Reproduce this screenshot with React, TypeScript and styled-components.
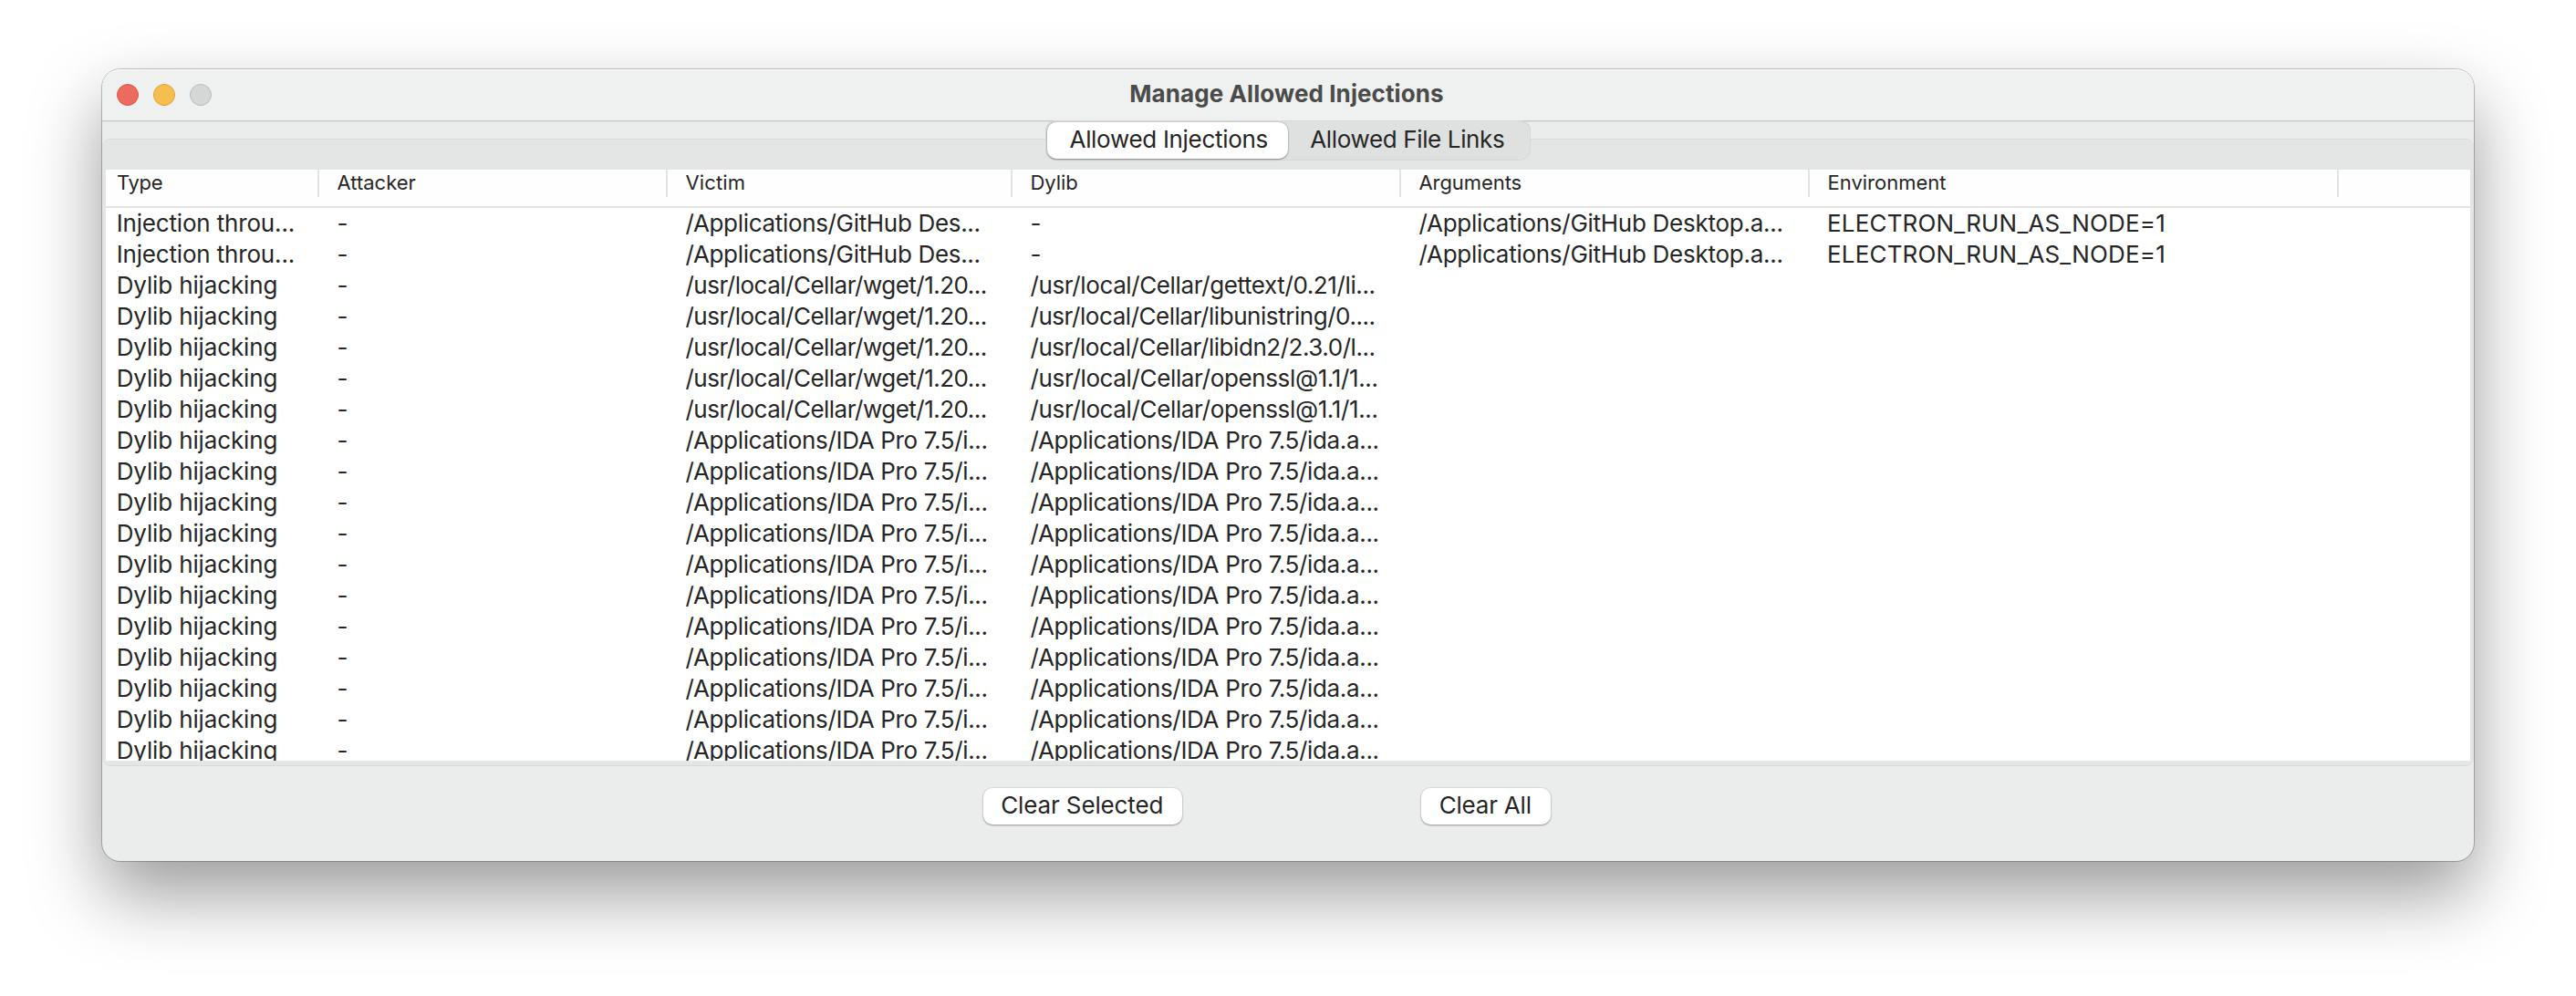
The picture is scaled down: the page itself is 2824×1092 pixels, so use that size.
import React from 'react';
import styled, { createGlobalStyle } from 'styled-components';

const GlobalStyle = createGlobalStyle`
  *, *::before, *::after { box-sizing: border-box; }
  body {
    margin: 0;
    background: #fff;
    overflow: hidden;
  }
`;

const Desktop = styled.main`
  width: 2824px;
  height: 1092px;
  padding: 76px 112px 148px;
  background: #fff;
  font-family: Inter, "Liberation Sans", sans-serif;
  font-size: 26px;
  color: #262626;
`;

const Window = styled.section`
  display: flex;
  flex-direction: column;
  height: 868px;
  border-radius: 20px;
  background: #ebedec;
  box-shadow:
    0 0 0 1px rgba(0, 0, 0, 0.23),
    0 36px 80px rgba(0, 0, 0, 0.4);
`;

const TitleBar = styled.header`
  display: grid;
  grid-template-columns: 1fr auto 1fr;
  height: 57px;
  border-bottom: 1px solid #c5c7c6;
  border-radius: 20px 20px 0 0;
  background: #eff1f0;
  box-shadow: inset 0 2px 1px -1px #fff, 0 1px 0 #dfe1e0;
`;

const TrafficLights = styled.div`
  display: flex;
  align-items: center;
  gap: 16px;
  padding-left: 16px;
`;

const Light = styled.span<{ $fill: string; $edge: string }>`
  width: 24px;
  height: 24px;
  border: 1px solid ${(p) => p.$edge};
  border-radius: 50%;
  background: ${(p) => p.$fill};
`;

const Title = styled.h1`
  margin: 0 3px 0 0;
  font-size: 26px;
  font-weight: 700;
  line-height: 53px;
  letter-spacing: 0.093px;
  color: #4a4b4a;
`;

const Content = styled.div`
  display: flex;
  flex-direction: column;
  padding-top: 19px;
`;

const TabPane = styled.div`
  display: flex;
  flex-direction: column;
  height: 688px;
  padding: 0 4px 5px;
  border-top: 1px solid #d8dad9;
  border-bottom: 1px solid #d8dad9;
  border-radius: 9px;
  background: #e4e6e5;
`;

const TabStrip = styled.div`
  display: flex;
  align-self: center;
  width: 532px;
  height: 44px;
  margin: -21px 0 10px;
  padding: 2px;
  border-radius: 12px;
  background: #dfe1e0;
  box-shadow: inset 0 0 0 1px #d7d9d8, inset 0 1px 0 #c2c4c3;
`;

const Tab = styled.button<{ $selected?: boolean; $width: number; $indent: number; $tracking: number }>`
  width: ${(p) => p.$width}px;
  height: 40px;
  padding: 0 0 3px ${(p) => p.$indent}px;
  border: 0;
  border-radius: 10px;
  background: ${(p) => (p.$selected ? '#fff' : 'transparent')};
  box-shadow: ${(p) =>
    p.$selected ? '0 0 0 1px rgba(0,0,0,.07), 0 1px 2px rgba(0,0,0,.35)' : 'none'};
  color: inherit;
  font: inherit;
  line-height: 37px;
  letter-spacing: ${(p) => p.$tracking}px;
  text-align: left;
  white-space: nowrap;
`;

const Table = styled.div`
  height: 648px;
  background: #fff;
  overflow: hidden;
`;

const columns = '234px 382px 378px 426px 448px 580px 1fr';

const HeaderRow = styled.div`
  display: grid;
  grid-template-columns: ${columns};
  height: 42px;
  border-bottom: 2px solid #e3e3e3;
  background: #fefefe;
`;

const HeaderCell = styled.div<{ $tracking?: number }>`
  height: 30px;
  padding-left: 19.5px;
  border-right: 2px solid #e2e2e2;
  font-size: 22px;
  line-height: 28px;
  letter-spacing: ${(p) => p.$tracking ?? 0}px;

  &:first-child { padding-left: 12px; }
  &:last-child { border-right: 0; }
`;

const Row = styled.div`
  display: grid;
  grid-template-columns: ${columns};
  height: 34px;
`;

const Cell = styled.div<{ $tracking: number }>`
  padding-left: 19.5px;
  line-height: 34px;
  letter-spacing: ${(p) => p.$tracking}px;
  white-space: nowrap;

  &:first-child { padding-left: 11.7px; }
  &:nth-child(6) { padding-left: 19px; }
`;

const Footer = styled.footer`
  display: flex;
  gap: 262px;
  padding: 24px 0 0 966px;
`;

const PushButton = styled.button<{ $width: number; $tracking: number }>`
  width: ${(p) => p.$width}px;
  height: 40px;
  padding: 0 1.5px 3px 0;
  border: 0;
  border-radius: 10px;
  background: #fff;
  box-shadow: 0 0 0 1px rgba(0, 0, 0, 0.06), 0 1px 2px rgba(0, 0, 0, 0.32);
  color: inherit;
  font: inherit;
  line-height: 37px;
  letter-spacing: ${(p) => p.$tracking}px;
`;

const tracking: Record<string, number> = {
  'Injection throu...': -0.17,
  'Dylib hijacking': -0.134,
  '/Applications/GitHub Des...': -0.324,
  '/usr/local/Cellar/wget/1.20...': -0.509,
  '/Applications/IDA Pro 7.5/i...': -0.333,
  '/usr/local/Cellar/gettext/0.21/li...': -0.389,
  '/usr/local/Cellar/libunistring/0....': -0.451,
  '/usr/local/Cellar/libidn2/2.3.0/l...': -0.456,
  '/usr/local/Cellar/openssl@1.1/1...': -0.36,
  '/Applications/IDA Pro 7.5/ida.a...': -0.34,
  '/Applications/GitHub Desktop.a...': -0.27,
  'ELECTRON_RUN_AS_NODE=1': 0.17,
};

const headers: { label: string; tracking?: number }[] = [
  { label: 'Type', tracking: -0.3 },
  { label: 'Attacker' },
  { label: 'Victim', tracking: 0.14 },
  { label: 'Dylib', tracking: -0.07 },
  { label: 'Arguments', tracking: -0.08 },
  { label: 'Environment' },
  { label: '' },
];

const github = [
  'Injection throu...', '-', '/Applications/GitHub Des...', '-',
  '/Applications/GitHub Desktop.a...', 'ELECTRON_RUN_AS_NODE=1',
];
const wget = (dylib: string) => ['Dylib hijacking', '-', '/usr/local/Cellar/wget/1.20...', dylib];
const ida = ['Dylib hijacking', '-', '/Applications/IDA Pro 7.5/i...', '/Applications/IDA Pro 7.5/ida.a...'];

const rows: string[][] = [
  github,
  github,
  wget('/usr/local/Cellar/gettext/0.21/li...'),
  wget('/usr/local/Cellar/libunistring/0....'),
  wget('/usr/local/Cellar/libidn2/2.3.0/l...'),
  wget('/usr/local/Cellar/openssl@1.1/1...'),
  wget('/usr/local/Cellar/openssl@1.1/1...'),
  ...Array.from({ length: 11 }, () => ida),
];

export default function App() {
  return (
    <>
      <GlobalStyle />
      <Desktop>
        <Window>
          <TitleBar>
            <TrafficLights>
              <Light $fill="#ed6a5e" $edge="#d9564b" />
              <Light $fill="#f5bf4f" $edge="#dea03a" />
              <Light $fill="#d5d7d6" $edge="#b9bbba" />
            </TrafficLights>
            <Title>Manage Allowed Injections</Title>
          </TitleBar>
          <Content>
            <TabPane>
              <TabStrip>
                <Tab $selected $width={264} $indent={24.5} $tracking={-0.309}>Allowed Injections</Tab>
                <Tab $width={264} $indent={24.3} $tracking={-0.364}>Allowed File Links</Tab>
              </TabStrip>
              <Table>
                <HeaderRow>
                  {headers.map((h, i) => (
                    <HeaderCell key={i} $tracking={h.tracking}>{h.label}</HeaderCell>
                  ))}
                </HeaderRow>
                {rows.map((row, i) => (
                  <Row key={i}>
                    {row.map((text, j) => (
                      <Cell key={j} $tracking={tracking[text] ?? 0}>{text}</Cell>
                    ))}
                  </Row>
                ))}
              </Table>
            </TabPane>
          </Content>
          <Footer>
            <PushButton $width={218} $tracking={-0.135}>Clear Selected</PushButton>
            <PushButton $width={142} $tracking={-0.205}>Clear All</PushButton>
          </Footer>
        </Window>
      </Desktop>
    </>
  );
}
